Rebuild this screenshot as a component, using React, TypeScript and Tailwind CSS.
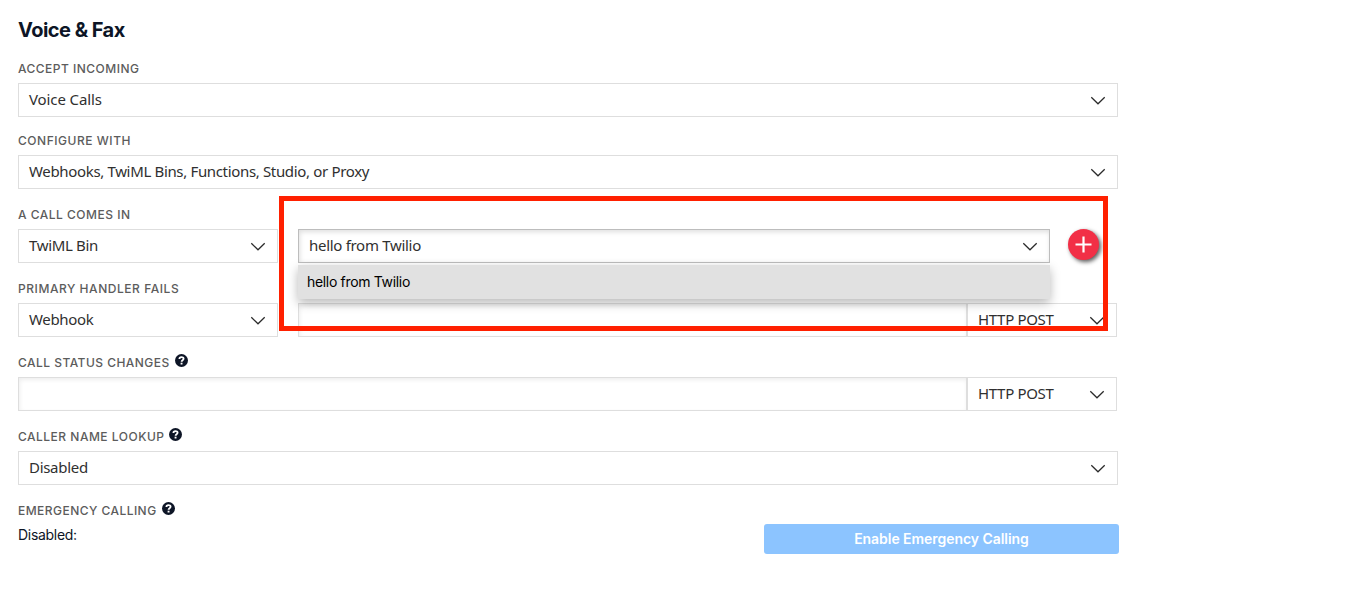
import React from "react";

const sans = "font-['Inter','Liberation_Sans',sans-serif]";
const humanist = "font-['Noto_Sans','Open_Sans',sans-serif]";

function Chevron() {
  return (
    <svg width="16" height="10" viewBox="0 0 16 10" fill="none" stroke="#2b2b2b" strokeWidth="1.25" className="mt-0.5 shrink-0">
      <path d="M1.3 1.3 L8 7.8 L14.7 1.3" />
    </svg>
  );
}

function Help() {
  return (
    <svg width="13" height="13" viewBox="0 0 13 13" className="mb-[5px] ml-[5px] shrink-0">
      <circle cx="6.5" cy="6.5" r="6.5" fill="#0d1526" />
      <path d="M4.4 5 C4.4 2.5 8.6 2.6 8.6 4.8 C8.6 6.2 6.6 6.1 6.6 7.7" fill="none" stroke="#fff" strokeWidth="1.8" />
      <rect x="5.6" y="8.7" width="1.9" height="1.8" fill="#fff" />
    </svg>
  );
}

function Label({ children, tracking, help }: { children: string; tracking: string; help?: boolean }) {
  return (
    <div className={`${sans} flex h-7 items-center text-[12px] leading-none font-medium text-[#5c5c5c]`}>
      <span className={`whitespace-nowrap ${tracking}`}>{children}</span>
      {help && <Help />}
    </div>
  );
}

function Select({ value, width, tracking, active }: { value: string; width: string; tracking: string; active?: boolean }) {
  return (
    <div
      className={`${humanist} ${width} flex h-[34px] shrink-0 items-center justify-between border bg-white pr-[11px] pl-2.5 text-[15px] leading-none text-[#303030] ${
        active ? "border-[#bdbdbd] shadow-[inset_1px_2px_5px_rgba(0,0,0,0.13)]" : "border-[#dedede]"
      }`}
    >
      <span className={`pb-px whitespace-nowrap ${tracking}`}>{value}</span>
      <Chevron />
    </div>
  );
}

function TextInput({ width }: { width: string }) {
  return <div className={`${width} h-[34px] shrink-0 border border-[#dedede] bg-white shadow-[inset_1px_2px_4px_rgba(0,0,0,0.07)]`} />;
}

export default function App() {
  return (
    <main className="relative h-[607px] w-[1362px] overflow-hidden bg-white pt-4 pl-[18px]">
      <h1 className={`${sans} h-[39px] text-[20px] leading-7 font-bold tracking-[-0.53px] text-[#0d1526]`}>Voice &amp; Fax</h1>
      <div className="flex flex-col gap-3">
        <div className="-mb-0.5">
          <Label tracking="tracking-[0.48px]">ACCEPT INCOMING</Label>
          <Select value="Voice Calls" width="w-[1100px]" tracking="tracking-[-0.1px]" />
        </div>
        <div>
          <Label tracking="tracking-[0.53px]">CONFIGURE WITH</Label>
          <Select value="Webhooks, TwiML Bins, Functions, Studio, or Proxy" width="w-[1100px]" tracking="tracking-[-0.34px]" />
        </div>
        <div>
          <Label tracking="tracking-[0.5px]">A CALL COMES IN</Label>
          <div className="flex">
            <Select value="TwiML Bin" width="w-[260px]" tracking="tracking-[-0.33px]" />
            <div className="relative ml-5">
              <Select value="hello from Twilio" width="w-[752px]" tracking="tracking-[-0.3px]" active />
              <div className={`${sans} absolute top-[36px] left-0 z-10 flex h-[34px] w-[752px] items-center bg-[#e1e1e1] pb-px pl-[9px] text-[14px] leading-none tracking-[-0.33px] text-black shadow-[0_4px_10px_rgba(0,0,0,0.28)]`}>
                hello from Twilio
              </div>
            </div>
            <button className="ml-[18px] flex size-[31px] items-center justify-center rounded-full bg-[#f22f46] shadow-[2px_2px_4px_rgba(0,0,0,0.65)]" aria-label="Add">
              <svg width="17" height="17" viewBox="0 0 17 17" stroke="#fff" strokeWidth="2.2">
                <path d="M8.5 0.5 V16.5 M0.5 8.5 H16.5" />
              </svg>
            </button>
          </div>
        </div>
        <div>
          <Label tracking="tracking-[0.55px]">PRIMARY HANDLER FAILS</Label>
          <div className="flex">
            <Select value="Webhook" width="w-[260px]" tracking="tracking-[-0.33px]" />
            <div className="ml-5 flex">
              <TextInput width="w-[669px]" />
              <Select value="HTTP POST" width="w-[150px]" tracking="tracking-[-0.32px]" />
            </div>
          </div>
        </div>
        <div>
          <Label tracking="tracking-[0.47px]" help>CALL STATUS CHANGES</Label>
          <div className="flex">
            <TextInput width="w-[949px]" />
            <Select value="HTTP POST" width="w-[150px]" tracking="tracking-[-0.32px]" />
          </div>
        </div>
        <div>
          <Label tracking="tracking-[0.5px]" help>CALLER NAME LOOKUP</Label>
          <Select value="Disabled" width="w-[1100px]" tracking="tracking-[-0.3px]" />
        </div>
        <div>
          <Label tracking="tracking-[0.46px]" help>EMERGENCY CALLING</Label>
          <div className={`${sans} flex w-[1101px] items-start justify-between text-[14px]`}>
            <span className="leading-5 tracking-[-0.3px] text-[#0d1526]">Disabled:</span>
            <button className="mt-[-1px] h-[30px] w-[355px] rounded-[3px] bg-[#8cc4ff] pb-px font-semibold tracking-[-0.05px] text-white">Enable Emergency Calling</button>
          </div>
        </div>
      </div>
      <div className="pointer-events-none absolute top-[196px] left-[279px] z-20 h-[135px] w-[829px] border-5 border-[#ff2000]" />
    </main>
  );
}
